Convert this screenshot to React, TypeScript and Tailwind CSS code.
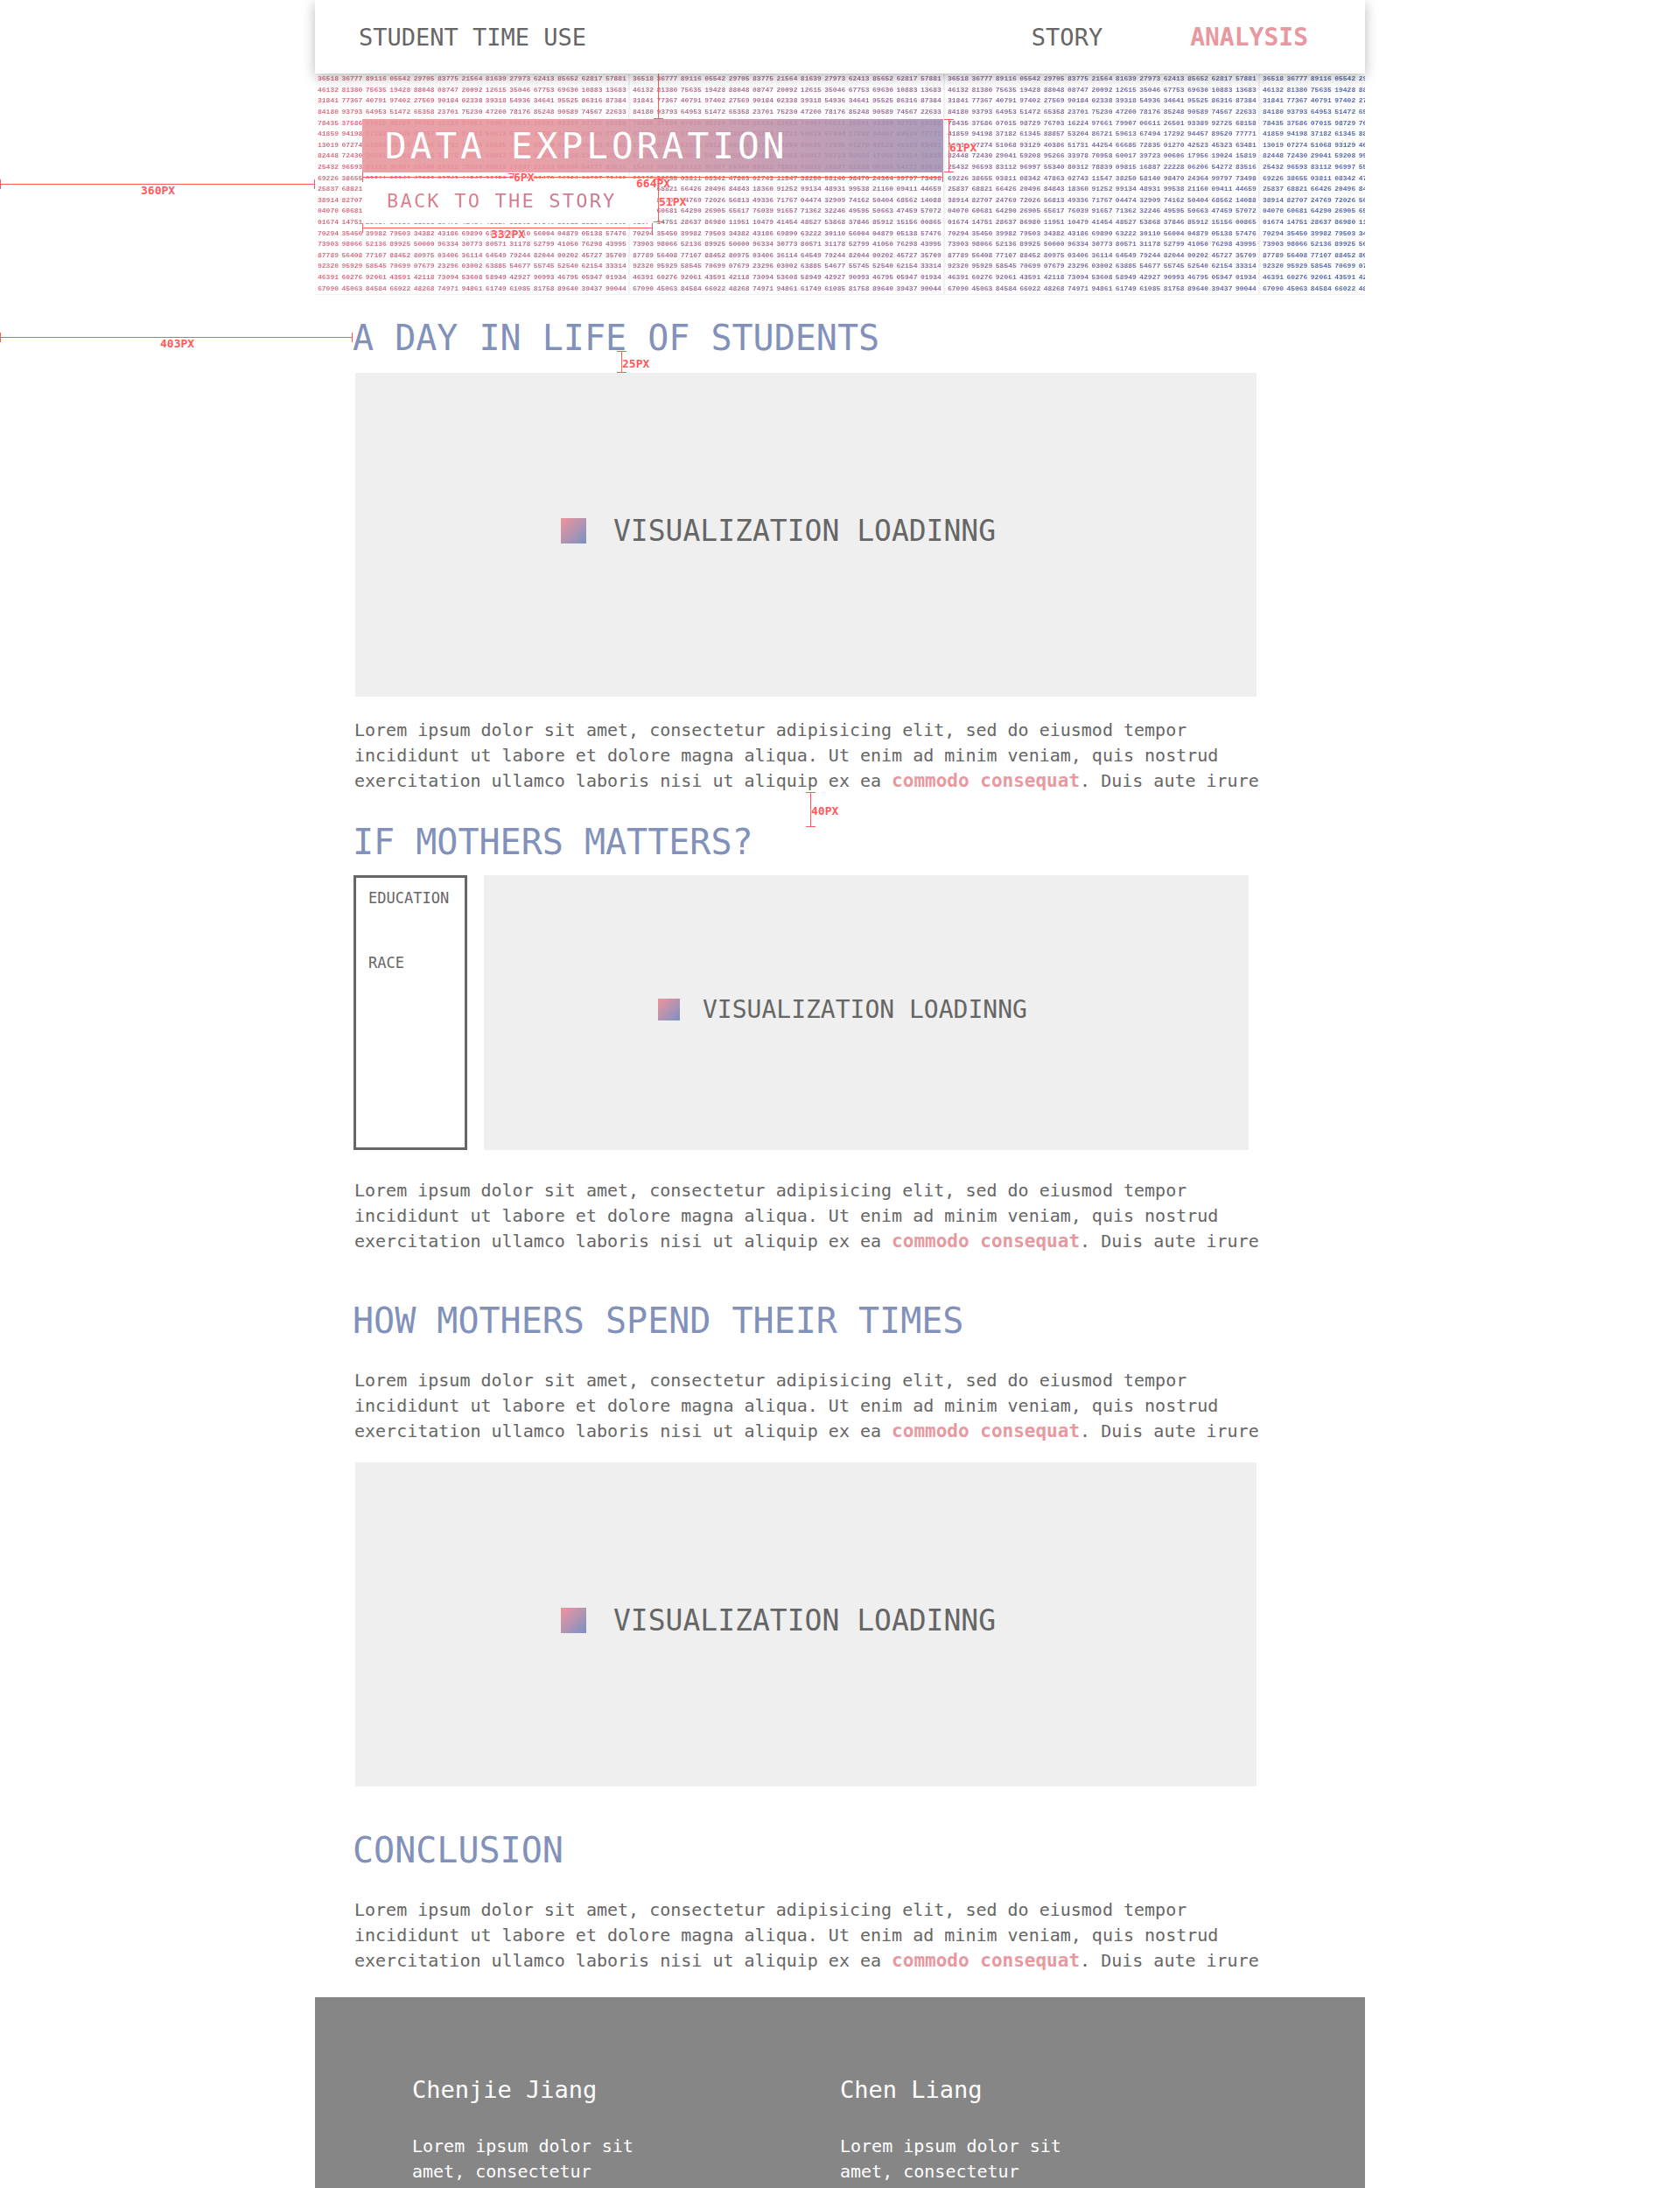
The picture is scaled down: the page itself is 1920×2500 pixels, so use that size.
import type { ReactNode } from 'react';

const DIGITS = [
  '36518 36777 89116 05542 29705 83775 21564 81639 27973 62413 85652 62817 57881',
  '46132 81380 75635 19428 88048 08747 20092 12615 35046 67753 69630 10883 13683',
  '31841 77367 40791 97402 27569 90184 02338 39318 54936 34641 95525 86316 87384',
  '84180 93793 64953 51472 65358 23701 75230 47200 78176 85248 90589 74567 22633',
  '78435 37586 07015 98729 76703 16224 97661 79907 06611 26501 93389 92725 68158',
  '41859 94198 37182 61345 88857 53204 86721 59613 67494 17292 94457 89520 77771',
  '13019 07274 51068 93129 40386 51731 44254 66685 72835 01270 42523 45323 63481',
  '82448 72430 29041 59208 95266 33978 70958 60017 39723 00606 17956 19024 15819',
  '25432 96593 83112 96997 55340 80312 78839 09815 16887 22228 06206 54272 83516',
  '69226 38655 03811 08342 47863 02743 11547 38250 58140 98470 24364 99797 73498',
  '25837 68821 66426 20496 84843 18360 91252 99134 48931 99538 21160 09411 44659',
  '38914 82707 24769 72026 56813 49336 71767 04474 32909 74162 50404 68562 14088',
  '04070 60681 64290 26905 65617 76039 91657 71362 32246 49595 50663 47459 57072',
  '01674 14751 28637 86980 11951 10479 41454 48527 53868 37846 85912 15156 00865',
  '70294 35450 39982 79503 34382 43186 69890 63222 30110 56004 04879 05138 57476',
  '73903 98066 52136 89925 50000 96334 30773 80571 31178 52799 41050 76298 43995',
  '87789 56408 77107 88452 80975 03406 36114 64549 79244 82044 00202 45727 35709',
  '92320 95929 58545 70699 07679 23296 03002 63885 54677 55745 52540 62154 33314',
  '46391 60276 92061 43591 42118 73094 53608 58949 42927 90993 46795 05947 01934',
  '67090 45063 84584 66022 48268 74971 94861 61749 61085 81758 89640 39437 90044',
];

function DigitTile() {
  return (
    <div className="flex h-full w-[30%] shrink-0 flex-col border-r-2 border-b border-[#7b6fa0]/10 pt-px pr-[2px] pl-[3px]">
      {DIGITS.map((row) => (
        <div key={row} className="flex flex-1 items-center justify-between">
          {row.split(' ').map((group) => (
            <span key={group}>{group}</span>
          ))}
        </div>
      ))}
    </div>
  );
}

function DigitBackdrop() {
  return (
    <div
      aria-hidden="true"
      className="flex h-full overflow-hidden bg-linear-to-r from-[#dc6b7c] via-[#91699a] via-60% to-[#4a64ab] bg-clip-text font-['Liberation_Mono',monospace] text-[8px] leading-none font-bold text-transparent"
    >
      <DigitTile />
      <DigitTile />
      <DigitTile />
      <DigitTile />
    </div>
  );
}

/* Horizontal spacing mark: a line with end ticks and its length. */
function SpanX({ place, label, labelPlace }: { place: string; label: string; labelPlace: string }) {
  return (
    <div className={`pointer-events-none absolute h-[11px] border-x border-[#ff5a5a] ${place}`}>
      <div className="mt-[5px] h-px bg-[#ff5a5a]" />
      <MarkLabel place={labelPlace}>{label}</MarkLabel>
    </div>
  );
}

/* Vertical spacing mark. */
function SpanY({ place, label }: { place: string; label?: string }) {
  return (
    <div className={`pointer-events-none absolute w-[11px] border-y border-[#ff5a5a] ${place}`}>
      <div className="mx-auto h-full w-px bg-[#ff5a5a]" />
      {label && <MarkLabel place="left-[6px] top-1/2 mt-[-6px]">{label}</MarkLabel>}
    </div>
  );
}

function MarkLabel({ place, children }: { place: string; children: ReactNode }) {
  return (
    <span
      className={`absolute text-[13px] leading-[16px] font-bold whitespace-nowrap text-[#ff5a5a] [text-shadow:0_0_2px_#fff,0_0_2px_#fff,0_0_2px_#fff] ${place}`}
    >
      {children}
    </span>
  );
}

function Heading({ children }: { children: ReactNode }) {
  return <h2 className="text-[40px] leading-[48px] text-[#8191ba]">{children}</h2>;
}

function Copy() {
  return (
    <p className="max-w-[1050px] pl-[2px] text-[20px] leading-[29px]">
      Lorem ipsum dolor sit amet, consectetur adipisicing elit, sed do eiusmod tempor
      <br />
      incididunt ut labore et dolore magna aliqua. Ut enim ad minim veniam, quis nostrud
      <br />
      exercitation ullamco laboris nisi ut aliquip ex ea{' '}
      <strong className="text-[21px] font-bold text-[#e8989f]">commodo consequat</strong>. Duis aute irure
    </p>
  );
}

function Swatch({ size }: { size: string }) {
  return <span className={`bg-linear-to-br from-[#ef9299] to-[#7690c4] ${size}`} />;
}

function WideViz() {
  return (
    <div className="ml-[3px] flex h-[370px] max-w-[1030px] items-center bg-[#efefef] pb-[10px] pl-[235px]">
      <Swatch size="size-[29px]" />
      <span className="ml-[31px] pt-[2px] text-[33px] leading-[40px]">VISUALIZATION LOADINNG</span>
    </div>
  );
}

function Author({ name }: { name: string }) {
  return (
    <div>
      <h3 className="text-[27px] leading-[32px]">{name}</h3>
      <p className="mt-[34px] max-w-[260px] text-[20px] leading-[29px]">Lorem ipsum dolor sit amet, consectetur</p>
    </div>
  );
}

export default function App() {
  return (
    <div className="overflow-x-clip bg-white font-['DejaVu_Sans_Mono',monospace] text-[#666]">
      <div className="relative mx-auto max-w-[1200px]">
        <header className="relative z-10 flex h-[84px] items-center bg-white pt-[2px] pr-[65px] pl-[50px] text-[27px] leading-[32px] shadow-[0_4px_14px_rgba(0,0,0,0.28)]">
          <a href="#top">STUDENT TIME USE</a>
          <nav className="ml-auto flex items-center gap-[100px]">
            <a href="#story">STORY</a>
            <a href="#analysis" className="text-[28px] font-bold text-[#e8989f]">
              ANALYSIS
            </a>
          </nav>
        </header>

        <section className="relative -mt-px h-[254px]">
          <div className="absolute inset-0">
            <DigitBackdrop />
          </div>
          <div className="relative flex flex-col items-start gap-[7px] pt-[53px] pl-[54px]">
            <h1 className="h-[61px] w-[664px] max-w-full bg-linear-to-r from-[#e6949c]/88 from-30% to-[#a08fb2]/88 pt-px pl-[26px] text-[41px] leading-[61px] tracking-widest text-white">
              DATA EXPLORATION
            </h1>
            <a href="#story" className="h-[51px] w-[337px] bg-white pl-[28px] text-[22px] leading-[51px] tracking-widest">
              <span className="bg-linear-to-r from-[#df7f8c] to-[#c9788f] bg-clip-text text-transparent">
                BACK TO THE STORY
              </span>
            </a>
          </div>

          <SpanX place="right-full top-[122px] w-[360px]" label="360PX" labelPlace="left-[160px] top-[5px]" />
          <SpanX place="left-[54px] top-[114px] w-[664px]" label="664PX" labelPlace="left-[312px] top-[5px]" />
          <SpanX place="left-[54px] top-[172px] w-[332px]" label="332PX" labelPlace="left-[146px] top-[5px]" />
          <SpanY place="left-[387px] top-0 h-[53px]" />
          <SpanY place="left-[387px] top-[121px] h-[50px]" label="51PX" />
          <SpanY place="left-[719px] top-[53px] h-[61px]" label="61PX" />
          <SpanY place="left-[221px] top-[115px] h-[5px]" label="6PX" />
        </section>

        <main className="px-[43px]">
          <section className="relative pt-[25px]">
            <Heading>A DAY IN LIFE OF STUDENTS</Heading>
            <div className="mt-[16px]">
              <WideViz />
            </div>
            <div className="mt-[24px]">
              <Copy />
            </div>
            <SpanX place="right-full top-[43px] w-[403px]" label="403PX" labelPlace="left-[182px] top-[5px]" />
            <SpanY place="left-[302px] top-[64px] h-[25px]" label="25PX" />
            <SpanY place="left-[518px] top-[568px] h-[40px]" label="40PX" />
          </section>

          <section className="pt-[31px]">
            <Heading>IF MOTHERS MATTERS?</Heading>
            <div className="mt-[14px] ml-px flex max-w-[1023px] gap-[19px]">
              <div className="flex h-[314px] w-[130px] shrink-0 flex-col gap-[54px] border-3 border-[#666] pt-[13px] pl-[14px] text-[17px] leading-[20px]">
                <span>EDUCATION</span>
                <span>RACE</span>
              </div>
              <div className="flex flex-1 items-center bg-[#efefef] pb-[8px] pl-[199px]">
                <Swatch size="size-[25px]" />
                <span className="ml-[26px] pt-[2px] text-[28px] leading-[34px]">VISUALIZATION LOADINNG</span>
              </div>
            </div>
            <div className="mt-[32px]">
              <Copy />
            </div>
          </section>

          <section className="pt-[52px]">
            <Heading>HOW MOTHERS SPEND THEIR TIMES</Heading>
            <div className="mt-[30px]">
              <Copy />
            </div>
            <div className="mt-[21px]">
              <WideViz />
            </div>
          </section>

          <section className="pt-[49px] pb-[27px]">
            <Heading>CONCLUSION</Heading>
            <div className="mt-[30px]">
              <Copy />
            </div>
          </section>
        </main>

        <footer className="grid h-[218px] grid-cols-[489px_1fr] overflow-hidden bg-[#868686] pt-[90px] pl-[111px] text-white">
          <Author name="Chenjie Jiang" />
          <Author name="Chen Liang" />
        </footer>
      </div>
    </div>
  );
}
